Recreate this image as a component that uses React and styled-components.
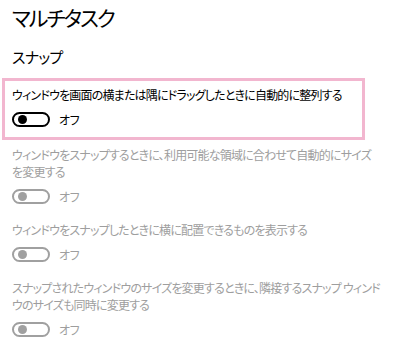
import React from 'react';
import styled, { createGlobalStyle } from 'styled-components';

const GlobalStyle = createGlobalStyle`
  html, body {
    margin: 0;
    padding: 0;
    background: #ffffff;
  }
  body {
    font-family: "Noto Sans CJK JP", "Noto Sans", sans-serif;
    font-feature-settings: "palt";
    color: #000000;
  }
`;

const settings = [
  {
    lines: ['ウィンドウを画面の横または隅にドラッグしたときに自動的に整列する'],
    active: true,
  },
  {
    lines: [
      'ウィンドウをスナップするときに、利用可能な領域に合わせて自動的にサイズ',
      'を変更する',
    ],
  },
  {
    lines: ['ウィンドウをスナップしたときに横に配置できるものを表示する'],
  },
  {
    lines: [
      'スナップされたウィンドウのサイズを変更するときに、隣接するスナップ ウィンド',
      'ウのサイズも同時に変更する',
    ],
  },
];

function Toggle({ disabled }) {
  return (
    <ToggleRow>
      <Switch $disabled={disabled}>
        <Knob $disabled={disabled} />
      </Switch>
      <State $disabled={disabled}>オフ</State>
    </ToggleRow>
  );
}

function App() {
  return (
    <Page>
      <GlobalStyle />
      <Title>マルチタスク</Title>
      <Subtitle>スナップ</Subtitle>
      {settings.map((s, i) => (
        <Setting key={i} $active={s.active} $afterBox={i === 1}>
          <Label $disabled={!s.active}>
            {s.lines.map((l) => (
              <Line key={l}>{l}</Line>
            ))}
          </Label>
          <Toggle disabled={!s.active} />
        </Setting>
      ))}
    </Page>
  );
}

export default App;

const Page = styled.div`
  width: 400px;
  height: 358px;
  padding-left: 2px;
  box-sizing: border-box;
  overflow: hidden;
`;

const Title = styled.h1`
  margin: 0;
  padding-left: 10px;
  font-size: 21px;
  font-weight: 400;
  line-height: 34px;
  letter-spacing: -2px;
  color: #000;
`;

const Subtitle = styled.h2`
  margin: 8px 0 0;
  padding-left: 10px;
  font-size: 15px;
  font-weight: 400;
  line-height: 30px;
  letter-spacing: -0.7px;
  color: #000;
`;

const Setting = styled.div`
  width: 363px;
  box-sizing: border-box;
  margin-top: ${(p) => (p.$active ? '6px' : p.$afterBox ? '6px' : '17px')};
  padding: ${(p) => (p.$active ? '5px 0 10px 7px' : '0 0 0 10px')};
  border: ${(p) => (p.$active ? '3px solid #f2b6cf' : 'none')};
`;

const Label = styled.div`
  font-size: 12px;
  line-height: 17px;
  letter-spacing: -0.8px;
  color: ${(p) => (p.$disabled ? '#9e9e9e' : '#000')};
`;

const Line = styled.span`
  display: block;
  white-space: nowrap;
`;

const ToggleRow = styled.div`
  display: flex;
  align-items: center;
  height: 16px;
  margin-top: 8px;
`;

const Switch = styled.div`
  width: 38px;
  height: 15px;
  box-sizing: border-box;
  border: 2px solid ${(p) => (p.$disabled ? '#a0a0a0' : '#000')};
  border-radius: 8px;
  display: flex;
  align-items: center;
  padding-left: 4px;
`;

const Knob = styled.div`
  width: 9px;
  height: 9px;
  border-radius: 50%;
  background: ${(p) => (p.$disabled ? '#a0a0a0' : '#000')};
`;

const State = styled.span`
  margin-left: 9px;
  font-size: 12px;
  letter-spacing: -0.5px;
  color: ${(p) => (p.$disabled ? '#9e9e9e' : '#000')};
`;
